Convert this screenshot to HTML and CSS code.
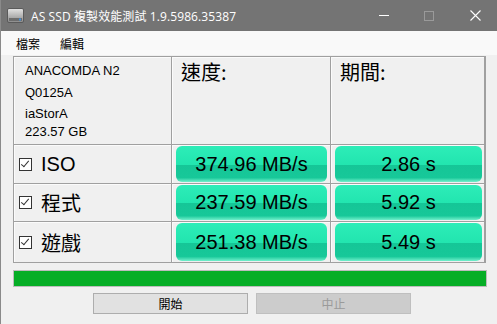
FILE: index.html
```html
<!DOCTYPE html>
<html lang="zh-Hant">
<head>
    <meta charset="UTF-8">
    <title>AS SSD 複製效能測試</title>
    <link rel="stylesheet" href="styles.css">
</head>
<body>
    <div class="window">
        <!-- Title Bar -->
        <div class="titlebar">
            <svg class="app-icon" width="17" height="15" viewBox="0 0 17 15">
                <defs>
                    <linearGradient id="drv" x1="0" y1="0" x2="0" y2="1">
                        <stop offset="0" stop-color="#e4e4e4"/>
                        <stop offset="1" stop-color="#8a8a8a"/>
                    </linearGradient>
                </defs>
                <rect x="0.5" y="0.5" width="16" height="14" rx="1.5" fill="url(#drv)" stroke="#5a5a5a"/>
                <rect x="2" y="10" width="13" height="3" fill="#6d6d6d"/>
                <rect x="12" y="10.5" width="2" height="2" fill="#3f8fe0"/>
            </svg>
            <span class="title">AS SSD 複製效能測試 1.9.5986.35387</span>
            <div class="controls">
                <span class="ctl ctl-min"></span>
                <span class="ctl ctl-max"></span>
                <svg class="ctl-close" width="11" height="11" viewBox="0 0 11 11">
                    <path d="M0.5 0.5 L10.5 10.5 M10.5 0.5 L0.5 10.5" stroke="#fff" stroke-width="1.1"/>
                </svg>
            </div>
        </div>

        <!-- Menu -->
        <div class="menubar">
            <span>檔案</span>
            <span>編輯</span>
        </div>

        <div class="main">
            <!-- Results Table -->
            <div class="results">
                <div class="cell info">
                    <div class="info-name">ANACOMDA N2</div>
                    <div class="info-fw">Q0125A</div>
                    <div class="info-drv">iaStorA</div>
                    <div class="info-size">223.57 GB</div>
                </div>
                <div class="cell head">速度:</div>
                <div class="cell head">期間:</div>

                <div class="cell label"><span class="check"></span>ISO</div>
                <div class="cell res speed"><div class="pill">374.96 MB/s</div></div>
                <div class="cell res time"><div class="pill">2.86 s</div></div>

                <div class="cell label"><span class="check"></span>程式</div>
                <div class="cell res speed"><div class="pill">237.59 MB/s</div></div>
                <div class="cell res time"><div class="pill">5.92 s</div></div>

                <div class="cell label"><span class="check"></span>遊戲</div>
                <div class="cell res speed"><div class="pill">251.38 MB/s</div></div>
                <div class="cell res time"><div class="pill">5.49 s</div></div>
            </div>

            <!-- Progress -->
            <div class="progress"><div class="progress-fill"></div></div>

            <!-- Buttons -->
            <div class="actions">
                <button class="btn">開始</button>
                <button class="btn btn-disabled">中止</button>
            </div>
        </div>
    </div>
</body>
</html>
```

FILE: styles.css
```css
* {
    margin: 0;
    padding: 0;
    box-sizing: border-box;
}
body {
    width: 497px;
    height: 324px;
    overflow: hidden;
    background-color: #f0f0f0;
    font-family: "Liberation Sans", "Noto Sans CJK TC", sans-serif;
}
.window {
    height: 324px;
    border-left: 1px solid #8a8a8a;
    background-color: #f0f0f0;
}
/* Title Bar */
.titlebar {
    height: 31px;
    background-color: #747474;
    display: flex;
    align-items: center;
    padding-left: 6px;
    color: #fff;
}
.app-icon {
    margin-right: 7px;
}
.title {
    font-family: "Open Sans", "Noto Sans CJK TC", sans-serif;
    font-size: 12px;
    letter-spacing: 0.1px;
}
.controls {
    margin-left: auto;
    display: flex;
    align-items: center;
    height: 31px;
}
.ctl-min {
    width: 10px;
    height: 1px;
    background-color: #fff;
    margin-right: 35px;
}
.ctl-max {
    width: 10px;
    height: 10px;
    border: 1px solid #9a9a9a;
    margin-right: 36px;
}
.ctl-close {
    margin-right: 16px;
}
/* Menu */
.menubar {
    height: 24px;
    background-color: #f9f9f9;
    display: flex;
    align-items: center;
    padding-left: 15px;
    font-family: "Noto Sans CJK TC", sans-serif;
    font-size: 12px;
    color: #000;
}
.menubar span {
    margin-right: 20px;
}
/* Main */
.main {
    padding: 1px 11px 0 12px;
}
.results {
    display: grid;
    grid-template-columns: 157px 158px 153px;
    grid-template-rows: 87px 38px 37px 40px;
    gap: 1px;
    background-color: #a0a0a0;
    border: 1px solid #a0a0a0;
    width: 473px;
}
.cell {
    background-color: #f0f0f0;
    box-shadow: inset 1px 1px 0 #fbfbfb;
}
.info {
    padding: 5px 0 0 11px;
    font-size: 13px;
    color: #000;
}
.info-name {
    height: 22px;
    line-height: 18px;
}
.info-fw {
    height: 21px;
    line-height: 18px;
}
.info-drv {
    height: 18px;
    line-height: 18px;
}
.info-size {
    line-height: 18px;
}
.head {
    font-family: "Noto Sans CJK TC", sans-serif;
    font-size: 20px;
    line-height: 24px;
    padding: 3px 0 0 9px;
    color: #000;
}
.label {
    display: flex;
    align-items: center;
    padding-left: 5px;
    font-size: 20px;
    color: #000;
}
.label .check {
    width: 13px;
    height: 13px;
    border: 1px solid #333;
    background-color: #fff;
    margin-right: 9px;
    position: relative;
}
.label .check::after {
    content: "";
    position: absolute;
    left: 3px;
    top: 0px;
    width: 3px;
    height: 7px;
    border: solid #333;
    border-width: 0 1.5px 1.5px 0;
    transform: rotate(40deg);
}
.res {
    padding: 1px 3px 1px 4px;
}
.time {
    padding-right: 2px;
}
.pill {
    height: 100%;
    border-radius: 6px;
    background: linear-gradient(#2dedb8 0%, #22e5af 52%, #15c697 52%, #17c899 88%, #72f0cc 100%);
    display: flex;
    align-items: center;
    justify-content: center;
    font-size: 20px;
    color: #000;
}
/* Progress */
.progress {
    margin-top: 7px;
    width: 474px;
    height: 17px;
    border: 1px solid #bcbcbc;
    background-color: #e6e6e6;
}
.progress-fill {
    width: 100%;
    height: 100%;
    background-color: #06ae26;
}
/* Buttons */
.actions {
    display: flex;
    gap: 8px;
    margin-top: 6px;
    padding-left: 80px;
}
.btn {
    width: 155px;
    height: 21px;
    border: 1px solid #adadad;
    background-color: #e1e1e1;
    font-family: "Noto Sans CJK TC", sans-serif;
    font-size: 12px;
    color: #000;
}
.btn-disabled {
    background-color: #cccccc;
    border-color: #bfbfbf;
    color: #9a9a9a;
}
```
